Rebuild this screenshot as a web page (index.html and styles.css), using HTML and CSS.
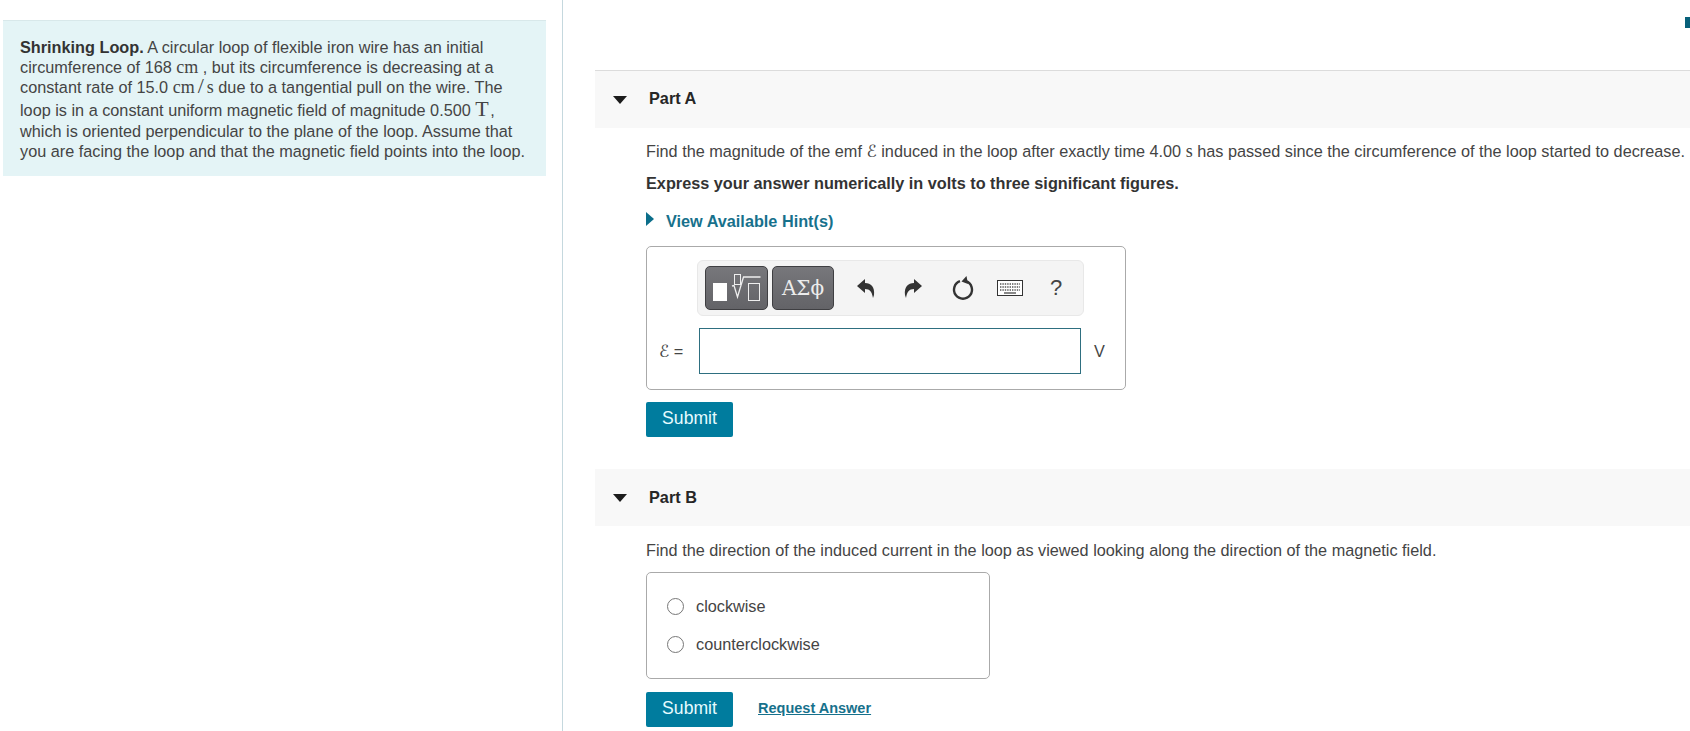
FILE: index.html
```html
<!DOCTYPE html>
<html>
<head>
    <title>Shrinking Loop</title>
    <link rel="stylesheet" href="styles.css">
</head>
<body>
    <div class="page">
        <div class="intro-col">
            <div class="intro">
                <strong>Shrinking Loop.</strong> A circular loop of flexible iron wire has an initial<br>
                circumference of 168 <span class="unit">cm</span> , but its circumference is decreasing at a<br>
                constant rate of 15.0 <span class="unit">cm<span class="slash">/</span>s</span> due to a tangential pull on the wire. The<br>
                loop is in a constant uniform magnetic field of magnitude 0.500 <span class="unit-big">T</span> ,<br>
                which is oriented perpendicular to the plane of the loop. Assume that<br>
                you are facing the loop and that the magnetic field points into the loop.
            </div>
        </div>

        <div class="parts-col">
            <div class="teal-mark"></div>

            <div class="part-head part-head-first">
                <span class="caret-down"></span>
                <span class="part-title">Part A</span>
            </div>
            <div class="part-body">
                <p class="question question-a">Find the magnitude of the emf <span class="emf">ℰ</span> induced in the loop after exactly time 4.00 <span class="unit">s</span> has passed since the circumference of the loop started to decrease.</p>
                <p class="instruction">Express your answer numerically in volts to three significant figures.</p>
                <a class="hint-link"><span class="caret-right"></span>View Available Hint(s)</a>

                <div class="answer-box">
                    <div class="toolbar">
                        <span class="tool-btn tool-btn-wide">
                            <svg width="54" height="36" viewBox="0 0 54 36">
                                <rect x="3" y="13" width="14" height="18" fill="#fff"/>
                                <rect x="24.5" y="4.5" width="6" height="10" fill="none" stroke="#eee" stroke-width="1"/>
                                <path d="M22 16l2-.5 3.5 11.5 6-20h17" fill="none" stroke="#eee" stroke-width="1.3"/>
                                <rect x="38.5" y="13.5" width="11" height="17" fill="none" stroke="#eee" stroke-width="1"/>
                            </svg>
                        </span>
                        <span class="tool-btn tool-btn-greek">ΑΣϕ</span>
                        <span class="tool-icons">
                            <svg class="icon-undo" width="20" height="22" viewBox="0 0 20 22">
                                <path d="M1 9l8-7v4c6 0 10 4 9 12l-1 3c-1-6-3-9-8-9v4z" fill="#333"/>
                            </svg>
                            <svg class="icon-redo" width="20" height="22" viewBox="0 0 20 22">
                                <path d="M19 9l-8-7v4c-6 0-10 4-9 12l1 3c1-6 3-9 8-9v4z" fill="#333"/>
                            </svg>
                            <svg class="icon-reset" width="24" height="24" viewBox="0 0 24 24">
                                <path d="M9 5.2a9 9 0 1 0 6 0" fill="none" stroke="#333" stroke-width="2.4"/>
                                <path d="M15.5 0l-5 5.5 6.5 2.5z" fill="#333"/>
                            </svg>
                            <svg class="icon-keys" width="26" height="16" viewBox="0 0 26 16">
                                <rect x="0.5" y="0.5" width="25" height="15" fill="#fff" stroke="#333"/>
                                <path d="M3 4h20M3 7h20M3 10h20" stroke="#555" stroke-width="1.6" stroke-dasharray="1.4 1"/>
                                <path d="M7 13h12" stroke="#555" stroke-width="1.4"/>
                            </svg>
                            <span class="tool-help">?</span>
                        </span>
                    </div>
                    <div class="answer-row">
                        <label class="answer-label"><span class="emf">ℰ</span> =</label>
                        <input class="answer-input" type="text">
                        <span class="answer-unit">V</span>
                    </div>
                </div>
                <button class="submit">Submit</button>
            </div>

            <div class="part-head">
                <span class="caret-down"></span>
                <span class="part-title">Part B</span>
            </div>
            <div class="part-body">
                <p class="question">Find the direction of the induced current in the loop as viewed looking along the direction of the magnetic field.</p>
                <div class="choice-box">
                    <div class="choice"><span class="radio"></span>clockwise</div>
                    <div class="choice"><span class="radio"></span>counterclockwise</div>
                </div>
                <div class="actions">
                    <button class="submit">Submit</button>
                    <a class="request-link">Request Answer</a>
                </div>
            </div>
        </div>
    </div>
</body>
</html>
```

FILE: styles.css
```css
html, body {
    margin: 0;
    height: 731px;
    overflow: hidden;
    background-color: #fff;
}

body {
    font-family: "Liberation Sans", Arial, sans-serif;
    font-size: 16.25px;
    color: #444;
}

.page {
    display: flex;
    height: 731px;
}

.intro-col {
    width: 563px;
    flex-shrink: 0;
    box-sizing: border-box;
    border-right: 1px solid #c5d8de;
    padding: 20px 0 0 3px;
}

.intro {
    width: 543px;
    height: 156px;
    box-sizing: border-box;
    background-color: #e4f4f6;
    border-top: 1px solid #d8e8ea;
    padding: 16px 0 0 17px;
    line-height: 20px;
    white-space: nowrap;
}

.intro strong {
    color: #333;
}

.unit {
    font-family: "Liberation Serif", serif;
    font-size: 18px;
    line-height: 0;
}

.slash {
    margin: 0 3px;
    font-size: 22px;
    line-height: 0;
}

.unit-big {
    font-family: "Liberation Serif", serif;
    font-size: 22px;
    line-height: 24px;
    margin-right: -3px;
}

.emf {
    font-family: "DejaVu Sans", sans-serif;
    font-style: italic;
    font-size: 17px;
    line-height: 0;
}

.parts-col {
    position: relative;
    flex: 1;
    min-width: 0;
    padding: 70px 0 0 32px;
    overflow: hidden;
}

.teal-mark {
    position: absolute;
    top: 17px;
    right: 0;
    width: 5px;
    height: 11px;
    background-color: #07607a;
}

.part-head {
    display: flex;
    align-items: center;
    height: 57px;
    background-color: #f8f8f8;
}

.part-head-first {
    border-top: 1px solid #dcdcdc;
}

.caret-down {
    width: 0;
    height: 0;
    margin-left: 18px;
    border-left: 7px solid transparent;
    border-right: 7px solid transparent;
    border-top: 8px solid #1c1c1c;
}

.part-title {
    margin-left: 22px;
    font-weight: bold;
    color: #262626;
}

.part-head-first .part-title {
    padding-bottom: 2px;
}

.part-body {
    padding: 0 0 0 51px;
}

.question {
    margin: 0;
    padding-top: 14px;
    line-height: 20px;
    white-space: nowrap;
}

.question-a {
    padding-top: 13px;
}

.instruction {
    margin: 12px 0 0;
    font-weight: bold;
    line-height: 20px;
    color: #333;
    white-space: nowrap;
}

.hint-link {
    display: flex;
    align-items: center;
    margin-top: 18px;
    font-weight: bold;
    line-height: 20px;
    color: #17718c;
}

.caret-right {
    width: 0;
    height: 0;
    margin-right: 12px;
    margin-top: -4px;
    border-top: 7px solid transparent;
    border-bottom: 7px solid transparent;
    border-left: 8px solid #0b6e8a;
}

.answer-box {
    width: 480px;
    height: 144px;
    box-sizing: border-box;
    margin-top: 15px;
    padding: 13px 0 0 50px;
    border: 1px solid #aaa;
    border-radius: 5px;
}

.toolbar {
    display: flex;
    align-items: center;
    width: 387px;
    height: 56px;
    box-sizing: border-box;
    padding-left: 7px;
    background-color: #f4f4f4;
    border: 1px solid #e8e8e8;
    border-radius: 6px;
}

.tool-btn {
    display: flex;
    align-items: center;
    justify-content: center;
    height: 44px;
    box-sizing: border-box;
    border: 1px solid #3f3f42;
    border-radius: 5px;
    background: linear-gradient(#77777b, #636367);
}

.tool-btn-wide {
    width: 63px;
}

.tool-btn-greek {
    width: 62px;
    margin-left: 4px;
    font-family: "DejaVu Serif", serif;
    font-size: 20px;
    color: #ececec;
}

.tool-icons {
    display: flex;
    align-items: center;
    margin-left: 22px;
}

.icon-redo {
    margin-left: 27px;
}

.icon-reset {
    margin-left: 28px;
}

.icon-keys {
    margin-left: 22px;
}

.tool-help {
    margin-left: 27px;
    font-size: 22px;
    color: #444;
}

.answer-row {
    display: flex;
    align-items: center;
    margin-top: 12px;
}

.answer-label {
    width: 52px;
    margin-left: -38px;
    white-space: nowrap;
}

.answer-input {
    width: 382px;
    height: 46px;
    box-sizing: border-box;
    margin: 0 0 0 -12px;
    border: 1px solid #2e6f80;
    padding: 0;
    background-color: #fff;
}

.answer-unit {
    margin-left: 13px;
    color: #444;
}

.submit {
    display: block;
    width: 87px;
    height: 35px;
    margin-top: 12px;
    padding: 0 0 2px;
    border: none;
    border-radius: 2px;
    background-color: #007c9e;
    font-family: "Liberation Sans", Arial, sans-serif;
    font-size: 17.6px;
    color: #e6fbff;
}

.part-body + .part-head {
    margin-top: 32px;
}

.choice-box {
    width: 344px;
    height: 107px;
    box-sizing: border-box;
    margin-top: 12px;
    padding: 14px 0 0 20px;
    border: 1px solid #aaa;
    border-radius: 5px;
}

.choice {
    display: flex;
    align-items: center;
    height: 38px;
}

.radio {
    width: 15px;
    height: 15px;
    margin-right: 12px;
    border: 1px solid #777;
    border-radius: 50%;
    background-color: #fff;
}

.actions {
    display: flex;
    align-items: flex-end;
    margin-top: 13px;
}

.actions .submit {
    margin-top: 0;
}

.request-link {
    margin: 0 0 11px 25px;
    font-weight: bold;
    font-size: 14.5px;
    color: #17718c;
    text-decoration: underline;
}
```
